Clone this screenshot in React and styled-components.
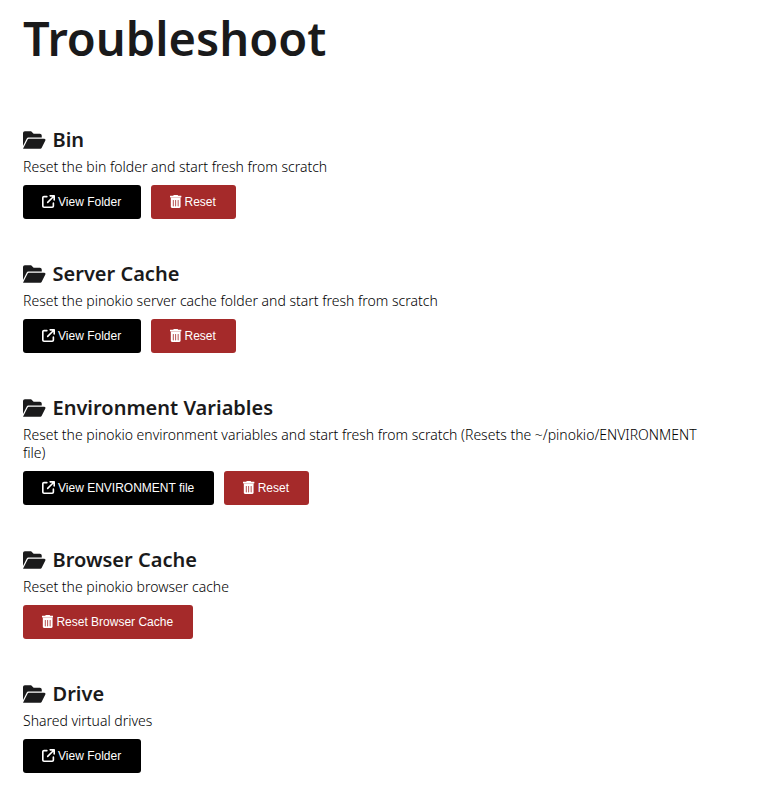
import React from "react";
import styled, { createGlobalStyle } from "styled-components";
import { FaArrowUpRightFromSquare } from "react-icons/fa6";

const sections = [
  {
    title: "Bin",
    desc: "Reset the bin folder and start fresh from scratch",
    view: "View Folder",
    reset: "Reset",
  },
  {
    title: "Server Cache",
    desc: "Reset the pinokio server cache folder and start fresh from scratch",
    view: "View Folder",
    reset: "Reset",
  },
  {
    title: "Environment Variables",
    desc: "Reset the pinokio environment variables and start fresh from scratch (Resets the ~/pinokio/ENVIRONMENT file)",
    view: "View ENVIRONMENT file",
    reset: "Reset",
  },
  {
    title: "Browser Cache",
    desc: "Reset the pinokio browser cache",
    reset: "Reset Browser Cache",
  },
  {
    title: "Drive",
    desc: "Shared virtual drives",
    view: "View Folder",
  },
];

const FolderIcon = () => (
  <svg viewBox="0 0 576 512" fill="currentColor" aria-hidden="true">
    <path d="M147.8 192H480V144C480 117.5 458.5 96 432 96h-160l-64-64h-160C21.49 32 0 53.49 0 80v328.4l90.54-181.1C101.4 205.6 123.4 192 147.8 192zM543.1 224H147.8C135.7 224 124.6 230.8 119.2 241.7L0 480h447.1c12.12 0 23.2-6.852 28.62-17.69l96-192C583.2 249 567.7 224 543.1 224z" />
  </svg>
);

const TrashIcon = () => (
  <svg viewBox="0 0 448 512" fill="currentColor" aria-hidden="true">
    <path d="M432 32H320l-11.58-23.16C305.7 3.42 300.2 0 294.1 0H153.9c-6.1 0-11.6 3.42-14.3 8.84L128 32H16C7.16 32 0 39.16 0 48v32c0 8.84 7.16 16 16 16h416c8.84 0 16-7.16 16-16V48c0-8.84-7.16-16-16-16z" />
    <path
      fillRule="evenodd"
      d="M32 464c0 26.5 21.5 48 48 48h288c26.5 0 48-21.5 48-48V96H32v368zM304 208c0-8.84 7.16-16 16-16s16 7.16 16 16v224c0 8.84-7.16 16-16 16s-16-7.16-16-16V208zM208 208c0-8.84 7.16-16 16-16s16 7.16 16 16v224c0 8.84-7.16 16-16 16s-16-7.16-16-16V208zM112 208c0-8.84 7.16-16 16-16s16 7.16 16 16v224c0 8.84-7.16 16-16 16s-16-7.16-16-16V208z"
    />
  </svg>
);

const Section = ({ title, desc, view, reset }) => {
  return (
    <SectionWrapper>
      <Heading>
        <FolderIcon />
        {title}
      </Heading>
      <Desc>{desc}</Desc>
      <Actions>
        {view && (
          <Button type="button">
            <FaArrowUpRightFromSquare size={13} />
            {view}
          </Button>
        )}
        {reset && (
          <Button type="button" $danger>
            <TrashIcon />
            {reset}
          </Button>
        )}
      </Actions>
    </SectionWrapper>
  );
};

const App = () => {
  return (
    <>
      <GlobalStyle />
      <Page>
        <Title>Troubleshoot</Title>
        {sections.map((section) => (
          <Section key={section.title} {...section} />
        ))}
      </Page>
    </>
  );
};

const GlobalStyle = createGlobalStyle`
  * {
    box-sizing: border-box;
  }
  body {
    margin: 0;
    background: white;
    color: #1a1a1b;
    font-family: "Noto Sans", "Open Sans", sans-serif;
  }
`;

const Page = styled.main`
  padding: 4px 58px 0 23px;
`;

const Title = styled.h1`
  margin: 0 0 55px;
  font-size: 47px;
  line-height: 68px;
  font-weight: 600;
`;

const SectionWrapper = styled.section`
  margin-bottom: 42px;

  &:last-child {
    margin-bottom: 0;
    padding-bottom: 34px;
  }
`;

const Heading = styled.h2`
  display: flex;
  align-items: center;
  gap: 7px;
  margin: 0 0 5px;
  font-size: 20px;
  line-height: 26px;
  font-weight: 600;

  svg {
    height: 20px;
  }
`;

const Desc = styled.p`
  margin: 0 0 9px;
  color: black;
  font-size: 14px;
  font-weight: 300;
  line-height: 18px;
`;

const Actions = styled.div`
  display: flex;
  gap: 10px;
`;

const Button = styled.button`
  display: flex;
  align-items: center;
  gap: 3px;
  height: 34px;
  padding: 0 20px 0 19px;
  border: 0;
  border-radius: 3px;
  background: ${(props) => (props.$danger ? "brown" : "black")};
  color: white;
  font-family: "Liberation Sans", Arial, sans-serif;
  font-size: 12px;
  cursor: pointer;

  svg {
    height: 13px;
    margin-bottom: 1px;
  }
`;

export default App;
